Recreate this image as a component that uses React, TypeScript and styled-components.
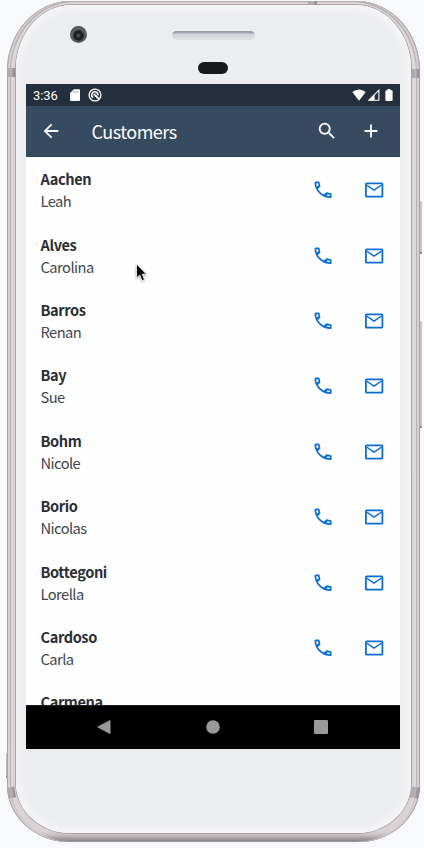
import React from 'react';
import styled, { createGlobalStyle } from 'styled-components';

const GlobalStyle = createGlobalStyle`
  * { box-sizing: border-box; }
  body { margin: 0; background: #f7f9fb; font-family: "Noto Sans CJK SC", "Noto Sans", sans-serif; overflow: hidden; }
`;

const Stage = styled.main`
  position: relative;
  width: 424px;
  height: 848px;
  padding: 1px 4px 6px 7px;
  background: #f7f9fb;
`;

const Device = styled.div`
  position: relative;
  height: 841px;
  padding: 4px 9px 9px 9px;
  border-radius: 64px 64px 62px 62px / 70px 70px 57px 57px;
  background: linear-gradient(180deg, #b0a9ac 0, #dbd5d8 2px, #d9d3d6 830px, #c8c1c4 834px, #a8a2a4 837px, #807b7d 841px);
  box-shadow: inset 1px 0 1px #a39da0, inset -1px 0 1px #a09a9d, inset 3px 0 1px #ded8db, inset -3px 0 1px #ded8db,
    inset 4px 1px 1px #aea7aa, inset -4px 1px 1px #aea7aa, inset 6px 2px 0 #e1dbde, inset -6px 2px 0 #e1dbde;
`;

const Bezel = styled.div`
  display: flex;
  flex-direction: column;
  height: 828px;
  padding: 0 11px 0 10px;
  border-radius: 56px 56px 54px 54px / 64px 64px 50px 50px;
  background: #ebedef;
  box-shadow: 0 0 0 1px #a9a2a6, inset 0 0 5px 5px #f4f3f5, inset 0 0 14px 2px #f0f0f2;
`;

const Forehead = styled.div`
  position: relative;
  flex: none;
  height: 79px;
`;

const Camera = styled.div`
  position: absolute;
  left: 44px;
  top: 21px;
  width: 17px;
  height: 17px;
  border-radius: 50%;
  background: radial-gradient(circle at 50% 56%, #6a6850 0, #292c2d 2px, #181b1d 4px, #34373a 5px, #606365 6.5px, #54575a 8px);
`;

const Speaker = styled.div`
  position: absolute;
  left: 146px;
  top: 26px;
  width: 83px;
  height: 9px;
  border-radius: 5px;
  background: linear-gradient(#9798a3 0, #a5a6b0 2px, #d0d1d6 3px, #dddfe2 8px);
`;

const Sensor = styled.div`
  position: absolute;
  left: 172px;
  top: 57px;
  width: 30px;
  height: 12px;
  border-radius: 6px;
  background: #171a1c;
`;

const Screen = styled.div`
  display: flex;
  flex-direction: column;
  flex: none;
  width: 374px;
  height: 665px;
  background: #fefefe;
`;

const StatusBar = styled.div`
  display: flex;
  align-items: center;
  flex: none;
  height: 22px;
  padding: 0 4px 0 7px;
  background: #232f3c;
  color: #fff;
`;

const Clock = styled.span`
  width: 36px;
  padding-top: 1px;
  font-family: Roboto, sans-serif;
  font-size: 12.9px;
  line-height: 22px;
`;

const StatusIcons = styled.div<{ $end?: boolean }>`
  display: flex;
  align-items: center;
  gap: ${p => (p.$end ? 2 : 7)}px;
  margin-left: ${p => (p.$end ? 'auto' : '0')};
  svg { display: block; }
`;

const Toolbar = styled.header`
  display: flex;
  align-items: center;
  flex: none;
  height: 51px;
  padding: 0 18px 0 14px;
  background: #364a60;
  border-bottom: 1px solid #2f4053;
  color: #fff;
`;

const Title = styled.h1`
  flex: 1;
  margin: 0 0 1px 29.5px;
  font-size: 18px;
  font-weight: 400;
  line-height: 24px;
  letter-spacing: -0.5px;
`;

const IconButton = styled.button<{ $gap?: number }>`
  display: flex;
  flex: none;
  margin: 0 0 0 ${p => p.$gap ?? 0}px;
  padding: 0;
  border: 0;
  background: none;
  color: inherit;
`;

const List = styled.ul`
  flex: 1;
  min-height: 0;
  margin: 0;
  padding: 0.5px 0 0;
  list-style: none;
  overflow: hidden;
`;

const Row = styled.li`
  display: flex;
  align-items: center;
  height: 65.4px;
  padding: 0 15px 0 14.5px;
  color: #0a6ed1;
`;

const Names = styled.div`
  flex: 1;
`;

const Surname = styled.div`
  font-size: 14.6px;
  font-weight: 700;
  line-height: 22px;
  letter-spacing: -0.4px;
  color: #2b2f35;
`;

const GivenName = styled.div`
  font-size: 14.7px;
  line-height: 22px;
  letter-spacing: -0.55px;
  color: #42474d;
`;

const NavBar = styled.nav`
  display: flex;
  align-items: center;
  flex: none;
  height: 44px;
  padding: 0 72px 1px 71px;
  justify-content: space-between;
  border-top: 1px solid #172024;
  background: #000;
`;

const Band = styled.div<{ $x: number; $y: number; $w: number; $h: number; $tilt?: number }>`
  position: absolute;
  left: ${p => p.$x}px;
  top: ${p => p.$y}px;
  width: ${p => p.$w}px;
  height: ${p => p.$h}px;
  transform: rotate(${p => p.$tilt ?? 0}deg);
  background: linear-gradient(90deg, #aaa4a7, #b8b1b5 50%, #8b8588);
`;

const SideKey = styled.div<{ $x: number; $y: number; $h: number }>`
  position: absolute;
  left: ${p => p.$x}px;
  top: ${p => p.$y}px;
  width: 3px;
  height: ${p => p.$h}px;
  border-radius: 1px;
  border-bottom: 2px solid #89868a;
  background: linear-gradient(90deg, #b8b4b7, #d1cdd0);
`;

const Pointer = styled.svg`
  position: absolute;
  left: 135px;
  top: 263px;
  filter: drop-shadow(0 1px 1px #0005);
`;

const customers = [
  ['Aachen', 'Leah'],
  ['Alves', 'Carolina'],
  ['Barros', 'Renan'],
  ['Bay', 'Sue'],
  ['Bohm', 'Nicole'],
  ['Borio', 'Nicolas'],
  ['Bottegoni', 'Lorella'],
  ['Cardoso', 'Carla'],
  ['Carmena', ''],
];

type GlyphProps = { d: string; size?: number };

const Glyph = ({ d, size = 22 }: GlyphProps) => (
  <svg width={size} height={size} viewBox="0 0 24 24" fill="currentColor">
    <path d={d} />
  </svg>
);

const back = 'M20 11H7.83l5.59-5.59L12 4l-8 8 8 8 1.41-1.41L7.83 13H20v-2z';
const search =
  'M15.5 14h-.79l-.28-.27A6.47 6.47 0 0 0 16 9.5 6.5 6.5 0 1 0 9.5 16c1.61 0 3.09-.59 4.23-1.57l.27.28v.79l5 4.99L20.49 19l-4.99-5zm-6 0A4.5 4.5 0 1 1 9.5 5a4.5 4.5 0 0 1 0 9z';
const plus = 'M19 13h-6v6h-2v-6H5v-2h6V5h2v6h6v2z';

const PhoneGlyph = () => (
  <svg width="22" height="22" viewBox="0 0 22 22" fill="none" stroke="currentColor" strokeWidth="1.7" strokeLinejoin="round">
    <path d="M3.3 3.3h3.3l1 3.8-2.5 2.5M3.3 3.3Q3.3 9.6 7.9 13.9 12.3 18.2 18.7 18.2v-3.1l-4-1-2.5 2.4M5.1 7.5h2.3M14.4 16.6v-2.3" />
  </svg>
);

const MailGlyph = () => (
  <svg width="22" height="22" viewBox="0 0 22 22" fill="none" stroke="currentColor" strokeWidth="1.8" strokeLinejoin="round">
    <rect x="2.9" y="4.3" width="16.5" height="13.4" rx=".8" />
    <path d="M3.5 6L11 11.2 18.6 6" strokeWidth="1.5" />
  </svg>
);

export default function App() {
  return (
    <Stage>
      <GlobalStyle />
      <SideKey $x={419} $y={201} $h={53} />
      <SideKey $x={419} $y={321} $h={107} />
      <SideKey $x={6} $y={753} $h={25} />
      <Device>
        <Bezel>
          <Forehead>
            <Camera />
            <Speaker />
            <Sensor />
          </Forehead>
          <Screen>
            <StatusBar>
              <Clock>3:36</Clock>
              <StatusIcons>
                <svg width="12" height="14" viewBox="0 0 12 14" fill="#fff">
                  <path d="M5 1.2h5q1 0 1 1V12q0 1-1 1H2q-1 0-1-1V5z" />
                  <path d="M5 3v2M7 3v2M9 3v2" stroke="#8c959d" strokeWidth=".8" />
                </svg>
                <svg width="14" height="14" viewBox="0 0 14 14" fill="none" stroke="#fff">
                  <circle cx="7" cy="7" r="5.9" strokeWidth="1.3" />
                  <path d="M5.2 9.6A3.1 3.1 0 1 1 9.9 7.4" strokeWidth="1.5" />
                  <path d="M5.9 6l4.9 4.9" strokeWidth="1.9" />
                </svg>
              </StatusIcons>
              <StatusIcons $end>
                <svg width="14" height="12" viewBox="0 0 14 12" fill="#fff">
                  <path d="M.3 3Q7-2.2 13.7 3L7 11.7z" />
                </svg>
                <svg width="12" height="12" viewBox="0 0 12 12">
                  <path d="M.9 11.2L10.9 1.2v10z" fill="none" stroke="#fff" strokeWidth="1.1" />
                  <path d="M.9 11.4L6.6 5.6v5.8z" fill="#fff" />
                </svg>
                <svg width="14" height="14" viewBox="0 0 14 14" fill="#fff">
                  <path d="M5.5 2.2V1h3v1.2h1.1q1 0 1 1V12q0 1-1 1H4.4q-1 0-1-1V3.2q0-1 1-1z" />
                </svg>
              </StatusIcons>
            </StatusBar>
            <Toolbar>
              <IconButton aria-label="Back"><Glyph d={back} /></IconButton>
              <Title>Customers</Title>
              <IconButton aria-label="Search"><Glyph d={search} /></IconButton>
              <IconButton aria-label="Add" $gap={22}><Glyph d={plus} /></IconButton>
            </Toolbar>
            <List>
              {customers.map(([surname, given]) => (
                <Row key={surname}>
                  <Names>
                    <Surname>{surname}</Surname>
                    <GivenName>{given || '\u00a0'}</GivenName>
                  </Names>
                  {given && (
                    <>
                      <IconButton aria-label="Call"><PhoneGlyph /></IconButton>
                      <IconButton aria-label="Email" $gap={29}><MailGlyph /></IconButton>
                    </>
                  )}
                </Row>
              ))}
            </List>
            <NavBar>
              <svg width="14" height="16" viewBox="0 0 14 16" fill="#999"><path d="M13 1.5v13L.8 8z" stroke="#999" strokeLinejoin="round" /></svg>
              <svg width="14" height="14" viewBox="0 0 14 14" fill="#999"><circle cx="7" cy="7" r="6.8" /></svg>
              <svg width="14" height="14" viewBox="0 0 14 14" fill="#999"><rect width="14" height="14" rx="1" /></svg>
            </NavBar>
          </Screen>
        </Bezel>
      </Device>
      <Band $x={7} $y={68} $w={8} $h={9} />
      <Band $x={412} $y={69} $w={7} $h={9} />
      <Band $x={308} $y={1} $w={9} $h={4} />
      <Band $x={8} $y={787} $w={7} $h={11} $tilt={-10} />
      <Band $x={411} $y={787} $w={8} $h={11} $tilt={10} />
      <Pointer width="13" height="20" viewBox="0 0 13 20">
        <path d="M1.5 1v14l3.2-3 2.3 5.6 2.5-1-2.3-5.4h4.3z" fill="#080808" stroke="#fff" strokeWidth=".8" />
      </Pointer>
    </Stage>
  );
}
